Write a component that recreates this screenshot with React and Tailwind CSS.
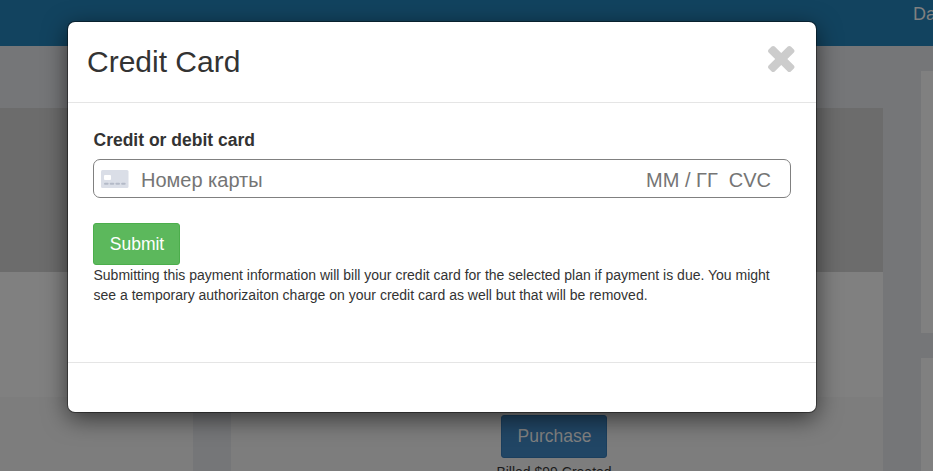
import React from "react";

function PlanColumn({ className, children }) {
  return (
    <div className={`flex flex-col shrink-0 mt-[62px] ${className}`}>
      <div className="h-[164px] shrink-0 bg-[#6c6c6c]" />
      <div className="h-[125px] shrink-0 bg-[#808080]" />
      <div className="flex grow flex-col items-center bg-[#7d7d7d] pt-[18px]">{children}</div>
    </div>
  );
}

function Page() {
  return (
    <div className="flex h-full flex-col bg-[#757678]">
      <header className="flex h-[46px] shrink-0 justify-end bg-[#12435f]">
        <div className="w-[20px] overflow-hidden whitespace-nowrap pt-[2px] text-[18px] leading-[24px] text-[#808080]">
          Dashboard
        </div>
      </header>
      <main className="flex grow">
        <PlanColumn className="w-[193px]" />
        <PlanColumn className="ml-[38px] w-[652px]">
          <button className="ml-[-6px] h-[43px] w-[106px] rounded-[3px] border border-[#1b3f5e] bg-[#214665] pb-[2px] pl-px text-[17.5px] leading-[24px] text-[#808080]">
            Purchase
          </button>
          <p className="ml-[-6px] mt-[4px] h-[9px] overflow-hidden text-[14px] leading-[20px] text-[#1a1a1a]">
            Billed $99 Created
          </p>
        </PlanColumn>
        <aside className="ml-[38px] flex w-[12px] flex-col gap-[25px] pt-[25px]">
          <div className="h-[262px] shrink-0 bg-[#808080]" />
          <div className="grow bg-[#808080]" />
        </aside>
      </main>
    </div>
  );
}

function CardIcon() {
  return (
    <svg width="28" height="18" viewBox="0 0 28 18" className="mt-px shrink-0">
      <rect width="27.5" height="18" rx="1.5" fill="#dadee7" />
      <rect x="3" y="5" width="7" height="5" rx="1" fill="#fff" />
      <g fill="#b4bac8">
        <rect x="3" y="12.8" width="4.6" height="2" rx="1" />
        <rect x="8.7" y="12.8" width="4.6" height="2" rx="1" />
        <rect x="14.4" y="12.8" width="4.6" height="2" rx="1" />
        <rect x="20.1" y="12.8" width="4.6" height="2" rx="1" />
      </g>
    </svg>
  );
}

function CloseIcon() {
  return (
    <svg
      width="26.5"
      height="26"
      viewBox="302 366 1188 1188"
      preserveAspectRatio="none"
      className="mt-[24px]"
      fill="#ccc"
    >
      <path d="M1490 1322q0 40-28 68l-136 136q-28 28-68 28t-68-28l-294-294-294 294q-28 28-68 28t-68-28l-136-136q-28-28-28-68t28-68l294-294-294-294q-28-28-28-68t28-68l136-136q28-28 68-28t68 28l294 294 294-294q28-28 68-28t68 28l136 136q28 28 28 68t-28 68l-294 294 294 294q28 28 28 68z" />
    </svg>
  );
}

function Modal() {
  return (
    <section className="absolute left-[68px] top-[22px] flex h-[390px] w-[748px] flex-col rounded-[7px] bg-white text-[#333] shadow-[0_0_0_1px_rgba(0,0,0,0.4),0_6px_24px_rgba(0,0,0,0.6)]">
      <header className="flex h-[81px] shrink-0 items-start justify-between border-b border-[#e5e5e5] pl-[19px] pr-[21.5px]">
        <h1 className="pt-[23px] text-[30px] leading-[34px]">Credit Card</h1>
        <CloseIcon />
      </header>
      <div className="flex h-[260px] shrink-0 flex-col items-start border-b border-[#e5e5e5] px-[25px] pt-[25px]">
        <label className="pl-[0.5px] text-[17.5px] font-bold leading-[24px]">Credit or debit card</label>
        <div className="mt-[7px] flex h-[39px] w-[698px] items-center rounded-[7px] border border-[#808080] pl-[7px] pr-[19px] text-[20px] leading-[24px] text-[#757575]">
          <CardIcon />
          <span className="ml-[12px] grow pt-[2px]">Номер карты</span>
          <span className="pt-[2px]">ММ / ГГ</span>
          <span className="ml-[11px] pt-[2px]">CVC</span>
        </div>
        <button className="mt-[25px] h-[42px] w-[87px] rounded-[3px] border border-[#4cae4c] bg-[#5cb85c] pl-px text-[17.5px] leading-[24px] text-white">
          Submit
        </button>
        <p className="w-[698px] pl-[0.5px] text-[14px] leading-[20px]">
          Submitting this payment information will bill your credit card for the selected plan if payment is due. You might
          <br />
          see a temporary authorizaiton charge on your credit card as well but that will be removed.
        </p>
      </div>
    </section>
  );
}

export default function App() {
  return (
    <div className="relative h-[471px] w-[933px] overflow-hidden font-['Liberation_Sans',Arial,sans-serif]">
      <Page />
      <Modal />
    </div>
  );
}
